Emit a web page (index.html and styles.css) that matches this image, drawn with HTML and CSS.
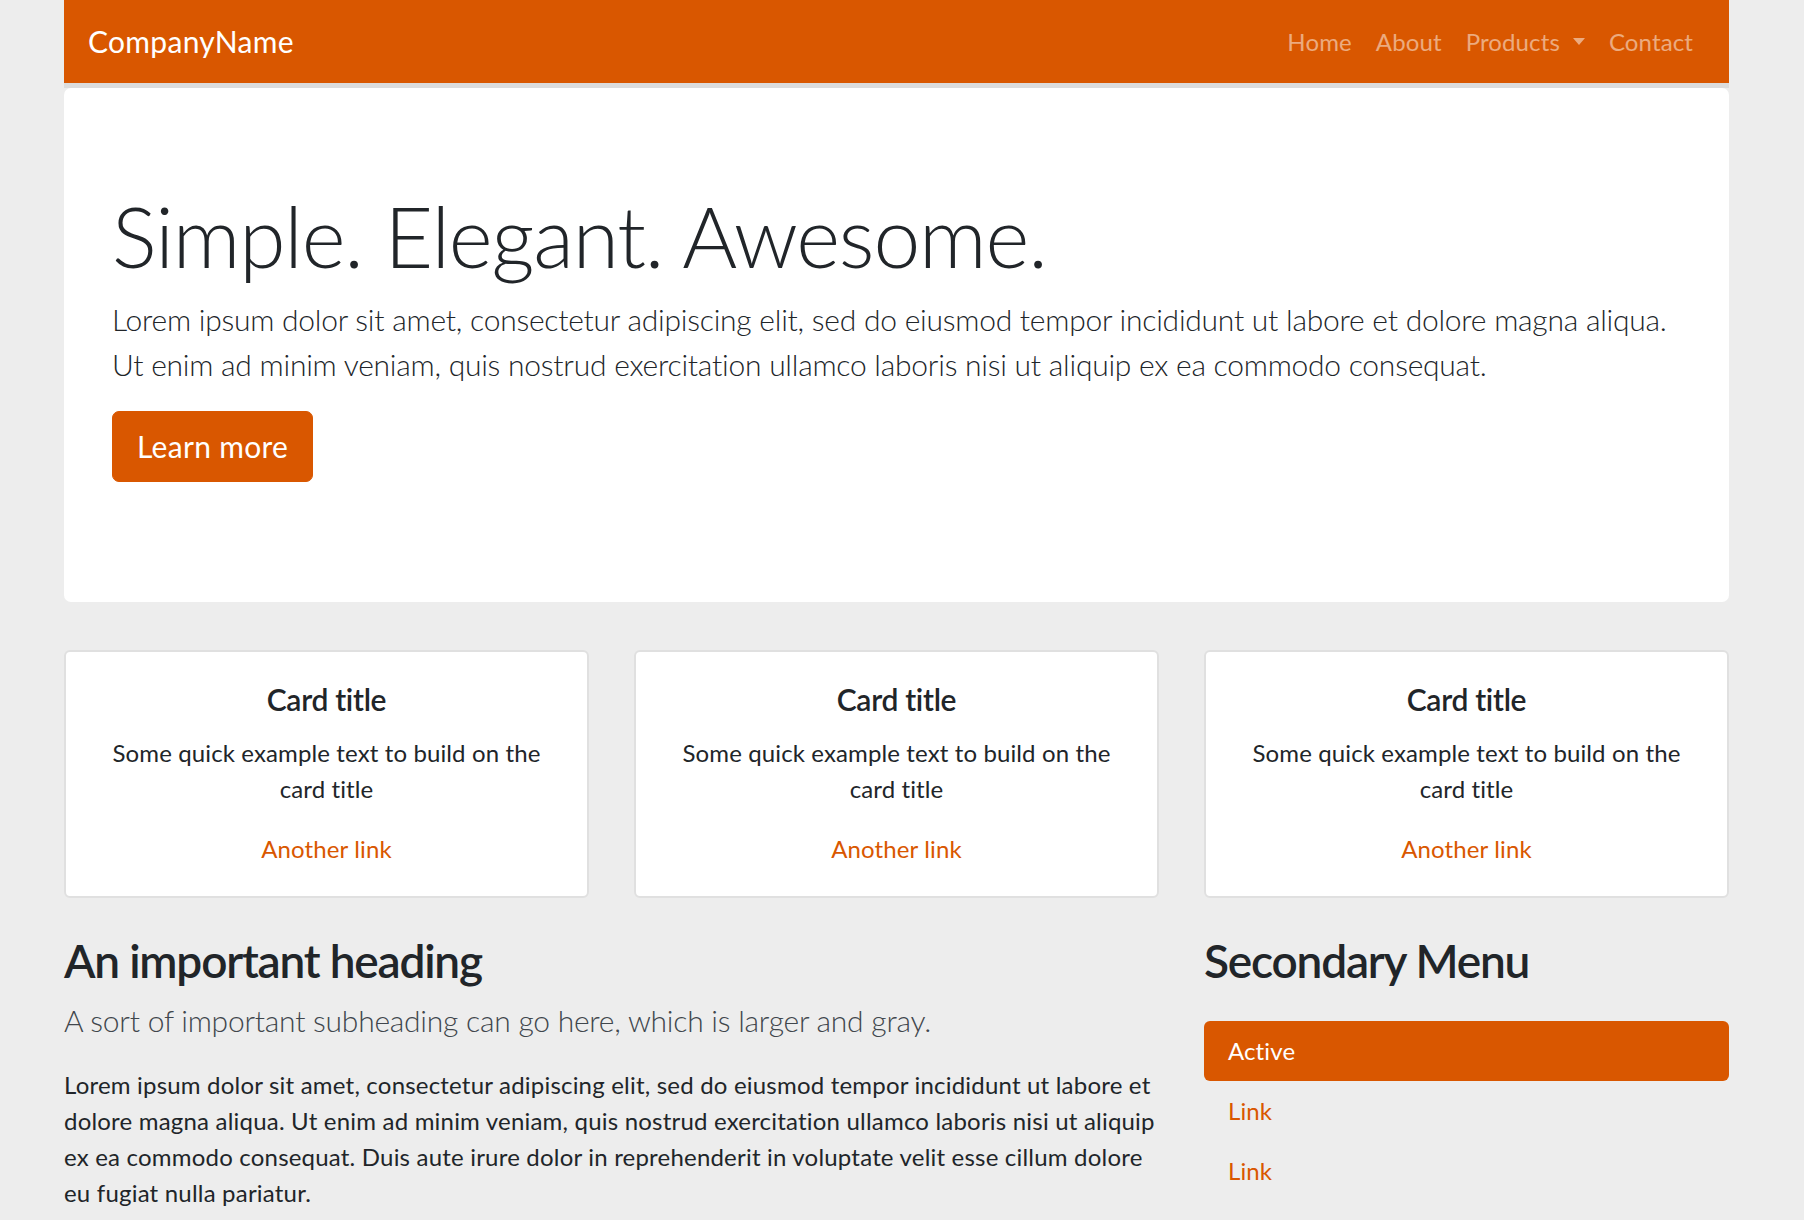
FILE: index.html
```html
<!DOCTYPE html>
<html lang="en">
<head>
<meta charset="utf-8">
<title>CompanyName</title>
<link rel="stylesheet" href="styles.css">
</head>
<body>
<div class="container">
  <nav class="navbar">
    <a class="brand" href="#">CompanyName</a>
    <ul class="navbar-nav">
      <li><a class="nav-link" href="#">Home</a></li>
      <li><a class="nav-link" href="#">About</a></li>
      <li><a class="nav-link dropdown-toggle" href="#">Products</a></li>
      <li><a class="nav-link" href="#">Contact</a></li>
    </ul>
  </nav>

  <section class="jumbotron">
    <h1 class="display">Simple. Elegant. Awesome.</h1>
    <p class="lead">Lorem ipsum dolor sit amet, consectetur adipiscing elit, sed do eiusmod tempor incididunt ut labore et dolore magna aliqua. Ut enim ad minim veniam, quis nostrud exercitation ullamco laboris nisi ut aliquip ex ea commodo consequat.</p>
    <div class="actions"><a class="btn-lg" href="#">Learn more</a></div>
  </section>

  <div class="cards">
    <div class="card">
      <h5 class="card-title">Card title</h5>
      <p class="card-text">Some quick example text to build on the card title</p>
      <a class="card-link" href="#">Another link</a>
    </div>
    <div class="card">
      <h5 class="card-title">Card title</h5>
      <p class="card-text">Some quick example text to build on the card title</p>
      <a class="card-link" href="#">Another link</a>
    </div>
    <div class="card">
      <h5 class="card-title">Card title</h5>
      <p class="card-text">Some quick example text to build on the card title</p>
      <a class="card-link" href="#">Another link</a>
    </div>
  </div>

  <div class="lower">
    <div class="main-col">
      <h2 class="heading">An important heading</h2>
      <p class="lead sub">A sort of important subheading can go here, which is larger and gray.</p>
      <p class="body-text">Lorem ipsum dolor sit amet, consectetur adipiscing elit, sed do eiusmod tempor incididunt ut labore et<br>dolore magna aliqua. Ut enim ad minim veniam, quis nostrud exercitation ullamco laboris nisi ut aliquip<br>ex ea commodo consequat. Duis aute irure dolor in reprehenderit in voluptate velit esse cillum dolore<br>eu fugiat nulla pariatur.</p>
    </div>
    <div class="side-col">
      <h2 class="heading">Secondary Menu</h2>
      <ul class="nav-pills">
        <li><a class="pill active" href="#">Active</a></li>
        <li><a class="pill" href="#">Link</a></li>
        <li><a class="pill" href="#">Link</a></li>
      </ul>
    </div>
  </div>
</div>
</body>
</html>
```
FILE: styles.css
```css
* { box-sizing: border-box; }

html, body {
  margin: 0;
  padding: 0;
}

body {
  background: #ededed;
  color: #212529;
  font-family: Lato, "Noto Sans", sans-serif;
  font-size: 24px;
  line-height: 36px;
  letter-spacing: 0.12px;
}

a { text-decoration: none; }

ul { list-style: none; margin: 0; padding: 0; }

.container {
  width: 1665px;
  margin-left: 64px;
}

/* Navbar */
.navbar {
  display: flex;
  align-items: center;
  justify-content: space-between;
  background: #d95700;
  padding: 12px 24px;
  height: 83px;
  box-shadow: 0 5px 0 0 #dcdcdc;
}

.brand {
  color: #ffffff;
  font-size: 30px;
  line-height: 45px;
  padding: 7.5px 0;
  letter-spacing: 0.3px;
}

.navbar-nav {
  display: flex;
  align-items: center;
}

.nav-link {
  display: block;
  padding: 12px 12px;
  color: rgba(255, 255, 255, 0.5);
  font-size: 24px;
  line-height: 36px;
}

.dropdown-toggle::after {
  content: "";
  display: inline-block;
  margin-left: 13px;
  vertical-align: 6px;
  border-top: 7px solid rgba(255, 255, 255, 0.5);
  border-left: 6.5px solid transparent;
  border-right: 6.5px solid transparent;
}

/* Jumbotron */
.jumbotron {
  margin-top: 5px;
  background: #ffffff;
  border-radius: 7px;
  padding: 96px 48px;
  margin-bottom: 48px;
}

.display {
  margin: 0 0 12px;
  padding-top: 3px;
  font-size: 84px;
  font-weight: 300;
  line-height: 98px;
  letter-spacing: -1.16px;
}

.lead {
  margin: 0 0 24px;
  font-size: 30px;
  font-weight: 300;
  line-height: 45px;
  letter-spacing: -0.24px;
}

.actions {
  display: flex;
  margin-bottom: 24px;
}

.btn-lg {
  display: inline-block;
  background: #d95700;
  border: 1.5px solid #d95700;
  color: #ffffff;
  font-size: 30px;
  line-height: 45px;
  padding: 12px 24px;
  border-radius: 7px;
  letter-spacing: 0.3px;
}

/* Cards */
.cards {
  display: grid;
  grid-template-columns: repeat(3, 525px);
  column-gap: 45px;
  margin-bottom: 34px;
}

.card {
  background: #ffffff;
  border: 2px solid #e0e0e0;
  border-radius: 6px;
  padding: 29px 30px;
  text-align: center;
}

.card-title {
  margin: 0 0 18px;
  font-size: 30px;
  font-weight: 600;
  line-height: 36px;
  letter-spacing: -0.3px;
}

.card-text {
  margin: 0 0 24px;
}

.card-link {
  color: #d95700;
}

/* Lower section */
.lower {
  display: grid;
  grid-template-columns: 1095px 525px;
  column-gap: 45px;
}

.heading {
  margin: 0 0 8px;
  font-size: 46px;
  font-weight: 600;
  line-height: 57.6px;
  letter-spacing: -1.2px;
}

.sub {
  color: #40464c;
  margin-bottom: 24.5px;
}

.body-text {
  margin: 0 0 24px;
  letter-spacing: 0.2px;
  white-space: nowrap;
}

.nav-pills {
  margin-top: 31px;
  display: flex;
  flex-direction: column;
}

.pill {
  display: block;
  padding: 12px 24px;
  color: #d95700;
  border-radius: 6px;
  line-height: 36px;
}

.pill.active {
  background: #d95700;
  color: #ffffff;
}
```
